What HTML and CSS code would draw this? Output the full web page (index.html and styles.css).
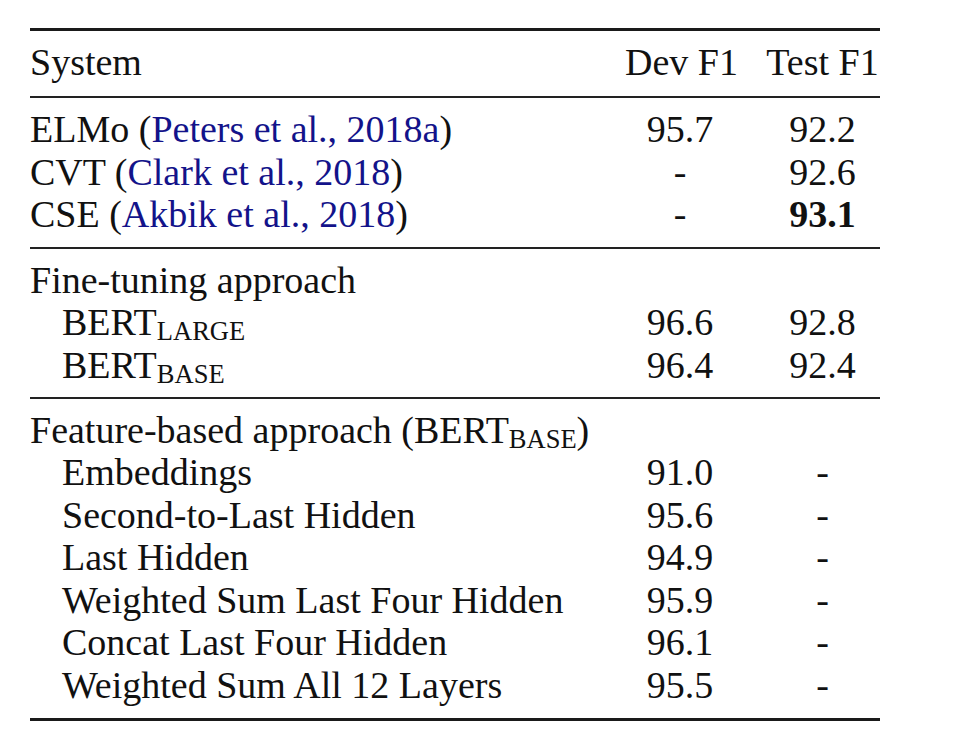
FILE: index.html
```html
<!DOCTYPE html>
<html>
<head>
<meta charset="utf-8">
<link rel="stylesheet" href="styles.css">
</head>
<body>
<div class="tbl">
  <div class="sec head">
    <div class="c1">System</div><div class="num">Dev F1</div><div class="num">Test F1</div>
  </div>
  <div class="sec">
    <div class="c1">ELMo (<span class="cite">Peters et al., 2018a</span>)</div><div class="num">95.7</div><div class="num">92.2</div>
    <div class="c1">CVT (<span class="cite">Clark et al., 2018</span>)</div><div class="num">-</div><div class="num">92.6</div>
    <div class="c1">CSE (<span class="cite">Akbik et al., 2018</span>)</div><div class="num">-</div><div class="num"><b>93.1</b></div>
  </div>
  <div class="sec">
    <div class="label">Fine-tuning approach</div>
    <div class="c1 ind">BERT<span class="sub">LARGE</span></div><div class="num">96.6</div><div class="num">92.8</div>
    <div class="c1 ind">BERT<span class="sub">BASE</span></div><div class="num">96.4</div><div class="num">92.4</div>
  </div>
  <div class="sec last">
    <div class="label">Feature-based approach (BERT<span class="sub">BASE</span>)</div>
    <div class="c1 ind">Embeddings</div><div class="num">91.0</div><div class="num">-</div>
    <div class="c1 ind">Second-to-Last Hidden</div><div class="num">95.6</div><div class="num">-</div>
    <div class="c1 ind">Last Hidden</div><div class="num">94.9</div><div class="num">-</div>
    <div class="c1 ind">Weighted Sum Last Four Hidden</div><div class="num">95.9</div><div class="num">-</div>
    <div class="c1 ind">Concat Last Four Hidden</div><div class="num">96.1</div><div class="num">-</div>
    <div class="c1 ind">Weighted Sum All 12 Layers</div><div class="num">95.5</div><div class="num">-</div>
  </div>
</div>
</body>
</html>
```
FILE: styles.css
```css
html, body {
  margin: 0;
  padding: 0;
  background: #ffffff;
}
body {
  padding-top: 28px;
  font-family: "Liberation Serif", "Times New Roman", serif;
  font-size: 38px;
  line-height: 42.5px;
  color: #111111;
}
.tbl {
  margin-left: 30px;
  width: 850px;
  border-top: 3px solid #1a1a1a;
  border-bottom: 3px solid #1a1a1a;
}
.sec {
  display: grid;
  grid-template-columns: 1fr 110px 115px;
  column-gap: 30px;
  grid-auto-rows: 42.5px;
  padding: 10px 0 11px;
  border-bottom: 2px solid #222222;
}
.sec.head {
  padding: 10px 0 12.5px;
}
.sec.last {
  border-bottom: none;
  padding: 9.5px 0 12px;
}
.c1 {
  white-space: nowrap;
}
.ind {
  padding-left: 32px;
}
.label {
  grid-column: 1 / -1;
  white-space: nowrap;
}
.num {
  text-align: center;
  white-space: nowrap;
}
.cite {
  color: #13138a;
}
.sub {
  font-size: 26.5px;
  line-height: 0;
  vertical-align: -0.17em;
}
b {
  font-weight: bold;
}
```
